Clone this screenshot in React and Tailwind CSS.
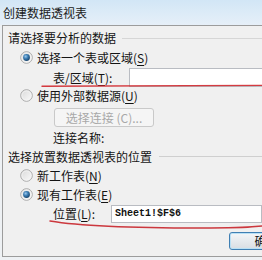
import React from "react";

function Radio({ checked }) {
  return (
    <svg width="13" height="13" viewBox="0 0 13 13" className="flex-none">
      <defs>
        <linearGradient id="rbg" x1="0" y1="0" x2="1" y2="1">
          <stop offset="0" stopColor="#d9d9d9" />
          <stop offset="1" stopColor="#fbfbfb" />
        </linearGradient>
        <radialGradient id="rdot" cx="0.38" cy="0.35" r="0.7">
          <stop offset="0" stopColor="#9cc8ec" />
          <stop offset="0.45" stopColor="#3d7fb5" />
          <stop offset="1" stopColor="#153f66" />
        </radialGradient>
      </defs>
      <circle cx="6.5" cy="6.5" r="5.8" fill="url(#rbg)" stroke="#a9a9a9" strokeWidth="1" />
      <circle cx="6.5" cy="6.5" r="4.6" fill="none" stroke="#f4f4f4" strokeWidth="0.8" />
      {checked && <circle cx="6.5" cy="6.5" r="3.4" fill="url(#rdot)" />}
    </svg>
  );
}

function U({ children }) {
  return <span className="underline underline-offset-[2px] decoration-1">{children}</span>;
}

export default function App() {
  return (
    <div className="relative w-[262px] h-[260px] overflow-hidden bg-[#eef1f4] font-['Noto_Sans_CJK_SC','Noto_Sans',sans-serif] text-[12px] leading-none text-[#141414]">
      <div className="h-[25px] flex items-center pl-[3px] bg-linear-to-b from-[#d2e6f6] via-[#dcebf7] to-[#e6eff8] text-[#1b1b1b]">
        创建数据透视表
      </div>
      <div className="ml-[2px] h-[232px] border-l border-t border-b border-[#9c9c9c] bg-[#f0f0f0] pt-[3px] flex flex-col">
        <div className="h-[18px] flex items-center pl-[5px]">
          <span className="whitespace-nowrap">请选择要分析的数据</span>
          <div className="flex-1 h-px bg-[#d6d6d6] ml-[6px]" />
        </div>
        <div className="h-[21px] flex items-center pl-[17px] gap-[4px] whitespace-nowrap">
          <Radio checked />
          <span>选择一个表或区域(<U>S</U>)</span>
        </div>
        <div className="h-[19px] flex items-center pl-[50px] whitespace-nowrap">
          <span className="w-[76px] flex-none">表/区域(<U>T</U>):</span>
          <div className="flex-none w-[150px] h-[19px] bg-white border border-[#b9bcc2]" />
        </div>
        <div className="h-[17px] flex items-center pl-[17px] gap-[4px] whitespace-nowrap">
          <Radio />
          <span>使用外部数据源(<U>U</U>)</span>
        </div>
        <div className="mt-[4px] h-[19px] flex items-center pl-[51px]">
          <div className="w-[100px] h-[19px] flex-none flex items-center justify-center border border-[#c9c9c9] rounded-[3px] bg-[#f5f5f5] text-[#a8a8a8] whitespace-nowrap">
            选择连接 (C)...
          </div>
        </div>
        <div className="mt-[2px] h-[18px] flex items-center pl-[50px] whitespace-nowrap">
          连接名称:
        </div>
        <div className="h-[19px] flex items-center pl-[5px]">
          <span className="whitespace-nowrap">选择放置数据透视表的位置</span>
          <div className="flex-1 h-px bg-[#cfcfcf] ml-[7px]" />
        </div>
        <div className="h-[19px] flex items-center pl-[17px] gap-[4px] whitespace-nowrap">
          <Radio />
          <span>新工作表(<U>N</U>)</span>
        </div>
        <div className="h-[19px] flex items-center pl-[17px] gap-[4px] whitespace-nowrap">
          <Radio checked />
          <span>现有工作表(<U>E</U>)</span>
        </div>
        <div className="h-[19px] flex items-center pl-[50px] whitespace-nowrap">
          <span className="w-[58px] flex-none">位置(<U>L</U>):</span>
          <div className="flex-none w-[151px] h-[18px] bg-white border border-[#b9bcc2] flex items-center pl-[3px] font-['Liberation_Mono',monospace] text-[10px] font-bold text-[#111]">
            Sheet1!$F$6
          </div>
        </div>
        <div className="mt-[9px] h-[18px] flex items-center pl-[226px]">
          <div className="flex-none w-[75px] h-[18px] flex items-center justify-center rounded-[3px] border border-[#3f7fb3] bg-linear-to-b from-[#f3f6f8] to-[#d9dee3] shadow-[inset_0_0_0_1px_#b9e0f5] whitespace-nowrap">
            确定
          </div>
        </div>
      </div>
      <svg className="absolute inset-0 pointer-events-none" width="262" height="260" viewBox="0 0 262 260">
        <path d="M42 86.2 C 100 85.8, 180 85.6, 262 85.4" fill="none" stroke="#d0262b" strokeWidth="1.4" strokeLinecap="round" opacity="0.9" />
        <path d="M50 221 C 80 226, 140 228, 200 228 S 250 226.5, 262 226" fill="none" stroke="#c8242a" strokeWidth="1.5" strokeLinecap="round" opacity="0.9" />
      </svg>
    </div>
  );
}
